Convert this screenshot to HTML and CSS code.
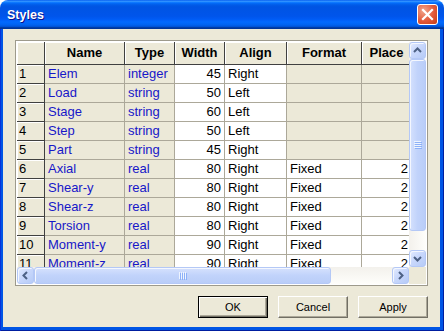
FILE: index.html
```html
<!DOCTYPE html>
<html lang="en">
<head>
    <meta charset="UTF-8">
    <title>Styles</title>
    <link rel="stylesheet" href="styles.css">
</head>
<body>
<div class="window">
    <div class="titlebar">
        <span class="title">Styles</span>
        <div class="close">
            <svg width="13" height="13" viewBox="0 0 13 13"><path d="M2 2 L11 11 M11 2 L2 11" stroke="#fff" stroke-width="2.2" stroke-linecap="square"/></svg>
        </div>
    </div>
    <div class="frame">
        <div class="client">
            <div class="grid">
                <div class="viewport">
                    <table>
                        <colgroup>
                            <col style="width:28px"><col style="width:80px"><col style="width:50px"><col style="width:50px"><col style="width:62px"><col style="width:75px"><col style="width:50px">
                        </colgroup>
                        <thead>
                            <tr>
                                <th></th><th>Name</th><th>Type</th><th>Width</th><th>Align</th><th>Format</th><th>Place</th>
                            </tr>
                        </thead>
                        <tbody>
                            <tr><td class="rh">1</td><td class="ro blue">Elem</td><td class="ro blue">integer</td><td class="num">45</td><td>Right</td><td class="ro"></td><td class="ro"></td></tr>
                            <tr><td class="rh">2</td><td class="ro blue">Load</td><td class="ro blue">string</td><td class="num">50</td><td>Left</td><td class="ro"></td><td class="ro"></td></tr>
                            <tr><td class="rh">3</td><td class="ro blue">Stage</td><td class="ro blue">string</td><td class="num">60</td><td>Left</td><td class="ro"></td><td class="ro"></td></tr>
                            <tr><td class="rh">4</td><td class="ro blue">Step</td><td class="ro blue">string</td><td class="num">50</td><td>Left</td><td class="ro"></td><td class="ro"></td></tr>
                            <tr><td class="rh">5</td><td class="ro blue">Part</td><td class="ro blue">string</td><td class="num">45</td><td>Right</td><td class="ro"></td><td class="ro"></td></tr>
                            <tr><td class="rh">6</td><td class="ro blue">Axial</td><td class="ro blue">real</td><td class="num">80</td><td>Right</td><td>Fixed</td><td class="num">2</td></tr>
                            <tr><td class="rh">7</td><td class="ro blue">Shear-y</td><td class="ro blue">real</td><td class="num">80</td><td>Right</td><td>Fixed</td><td class="num">2</td></tr>
                            <tr><td class="rh">8</td><td class="ro blue">Shear-z</td><td class="ro blue">real</td><td class="num">80</td><td>Right</td><td>Fixed</td><td class="num">2</td></tr>
                            <tr><td class="rh">9</td><td class="ro blue">Torsion</td><td class="ro blue">real</td><td class="num">80</td><td>Right</td><td>Fixed</td><td class="num">2</td></tr>
                            <tr><td class="rh">10</td><td class="ro blue">Moment-y</td><td class="ro blue">real</td><td class="num">90</td><td>Right</td><td>Fixed</td><td class="num">2</td></tr>
                            <tr><td class="rh">11</td><td class="ro blue">Moment-z</td><td class="ro blue">real</td><td class="num">90</td><td>Right</td><td>Fixed</td><td class="num">2</td></tr>
                        </tbody>
                    </table>
                </div>

                <!-- vertical scrollbar -->
                <div class="vscroll">
                    <div class="sbtn">
                        <svg width="15" height="15" viewBox="0 0 15 15"><polyline points="4,9 7.5,5.5 11,9" fill="none" stroke="#4d6185" stroke-width="2"/></svg>
                    </div>
                    <div class="thumb vthumb">
                        <svg width="8" height="8" viewBox="0 0 8 8"><path d="M0 0.5h7M0 2.5h7M0 4.5h7M0 6.5h7" stroke="#eef4fe" stroke-width="1"/><path d="M1 1.5h7M1 3.5h7M1 5.5h7M1 7.5h7" stroke="#8cb0f8" stroke-width="1"/></svg>
                    </div>
                    <div class="track"></div>
                    <div class="sbtn">
                        <svg width="15" height="15" viewBox="0 0 15 15"><polyline points="4,6 7.5,9.5 11,6" fill="none" stroke="#4d6185" stroke-width="2"/></svg>
                    </div>
                </div>

                <!-- horizontal scrollbar -->
                <div class="hscroll">
                    <div class="sbtn">
                        <svg width="15" height="15" viewBox="0 0 15 15"><polyline points="9,4 5.5,7.5 9,11" fill="none" stroke="#4d6185" stroke-width="2"/></svg>
                    </div>
                    <div class="thumb hthumb">
                        <svg width="8" height="8" viewBox="0 0 8 8"><path d="M0.5 0v7M2.5 0v7M4.5 0v7M6.5 0v7" stroke="#eef4fe" stroke-width="1"/><path d="M1.5 1v7M3.5 1v7M5.5 1v7M7.5 1v7" stroke="#8cb0f8" stroke-width="1"/></svg>
                    </div>
                    <div class="track"></div>
                    <div class="sbtn">
                        <svg width="15" height="15" viewBox="0 0 15 15"><polyline points="6,4 9.5,7.5 6,11" fill="none" stroke="#4d6185" stroke-width="2"/></svg>
                    </div>
                </div>
                <div class="corner"></div>
            </div>

            <div class="actions">
                <button class="btn default">OK</button>
                <button class="btn">Cancel</button>
                <button class="btn">Apply</button>
            </div>
        </div>
    </div>
</div>
</body>
</html>
```

FILE: styles.css
```css
body {
    margin: 0;
    background: #fff;
    font-family: "Liberation Sans", Arial, sans-serif;
}

.window {
    width: 444px;
    height: 331px;
    display: flex;
    flex-direction: column;
    border-radius: 8px 8px 0 0;
    overflow: hidden;
}

/* title bar */
.titlebar {
    height: 29px;
    flex: none;
    display: flex;
    align-items: center;
    justify-content: space-between;
    padding: 0 6px 0 7px;
    background: linear-gradient(to bottom, #0058ee 0%, #3593ff 4%, #288eff 6%, #127dff 8%, #036ffc 10%, #0262ee 14%, #0057e5 20%, #0054e3 24%, #0055eb 56%, #005bf5 66%, #026afe 76%, #0062ef 86%, #0052d6 92%, #0040ab 94%, #003092 100%);
}
.title {
    color: #fff;
    font-weight: bold;
    font-size: 12.5px;
    text-shadow: 1px 1px #0f1089;
    margin-top: 1px;
}
.close {
    width: 21px;
    height: 21px;
    box-sizing: border-box;
    border: 1px solid #fff;
    border-radius: 3px;
    background: radial-gradient(circle at 30% 30%, #f0a58c 0%, #e2593a 55%, #c43d16 100%);
    display: flex;
    align-items: center;
    justify-content: center;
}

.frame {
    flex: 1;
    display: flex;
    padding: 0 4px 4px 3px;
    background: #0055e5;
    box-shadow: inset 1px 0 #0831d9, inset -1px 0 #001ea0, inset 0 -1px #001ea0;
}
.client {
    flex: 1;
    background: #ece9d8;
    padding: 11px 12px 0 12px;
}

/* grid */
.grid {
    display: grid;
    grid-template-columns: 392px 17px;
    grid-template-rows: 225px 17px;
    width: max-content;
    border: 1px solid #9d9a8c;
    padding: 1px;
    background: #fff;
}
.viewport {
    overflow: hidden;
    background: #fff;
}
table {
    table-layout: fixed;
    width: 395px;
    border-collapse: separate;
    border-spacing: 0;
}
th, td {
    padding: 0 3px;
    border-right: 1px solid #aca899;
    border-bottom: 1px solid #aca899;
    white-space: nowrap;
    overflow: hidden;
    font-size: 13px;
    line-height: 18px;
    color: #000;
    text-align: left;
}
thead tr {
    height: 23px;
}
tbody tr {
    height: 19px;
}
th {
    background: #ece9d8;
    border-right-color: #404040;
    border-bottom-color: #404040;
    box-shadow: inset 1px 1px #fff;
    font-weight: bold;
    text-align: center;
    line-height: 22px;
}
td.rh {
    background: #ece9d8;
    border-right-color: #404040;
    border-bottom-color: #404040;
    box-shadow: inset 1px 1px #fff;
    padding-left: 2px;
}
td.ro {
    background: #ece9d8;
}
td.blue {
    color: #1717c8;
}
td.num {
    text-align: right;
}

/* scrollbars */
.vscroll, .hscroll {
    display: flex;
    background: linear-gradient(to right, #f3f1ec, #fefefb);
}
.vscroll {
    flex-direction: column;
}
.hscroll {
    background: linear-gradient(to bottom, #f3f1ec, #fefefb);
}
.track {
    flex: 1;
}
.sbtn, .thumb {
    box-sizing: border-box;
    border: 1px solid #b4c8f6;
    border-radius: 3px;
    background: linear-gradient(135deg, #e3ebfe 0%, #c9d8fc 45%, #b6cbf7 100%);
    box-shadow: inset 1px 1px #f4f7fe;
    display: flex;
    align-items: center;
    justify-content: center;
}
.sbtn {
    width: 17px;
    height: 17px;
    flex: none;
}
.vthumb {
    height: 172px;
    background: linear-gradient(to right, #d5e1fd, #c1d3fb 50%, #b9cdf8);
}
.hthumb {
    width: 297px;
    background: linear-gradient(to bottom, #d5e1fd, #c1d3fb 50%, #b9cdf8);
}
.corner {
    background: #ece9d8;
}

/* buttons */
.actions {
    display: flex;
    justify-content: flex-end;
    gap: 10px;
    margin-top: 10px;
}
.btn {
    width: 70px;
    height: 22px;
    padding: 0;
    background: #ece9d8;
    border: 1px solid;
    border-color: #fff #716f64 #716f64 #fff;
    box-shadow: inset -1px -1px #aca899;
    font-family: "Liberation Sans", Arial, sans-serif;
    font-size: 11px;
    color: #000;
}
.btn.default {
    border-color: #000;
    box-shadow: inset 1px 1px #fff, inset -1px -1px #716f64, inset -2px -2px #aca899;
}
```
